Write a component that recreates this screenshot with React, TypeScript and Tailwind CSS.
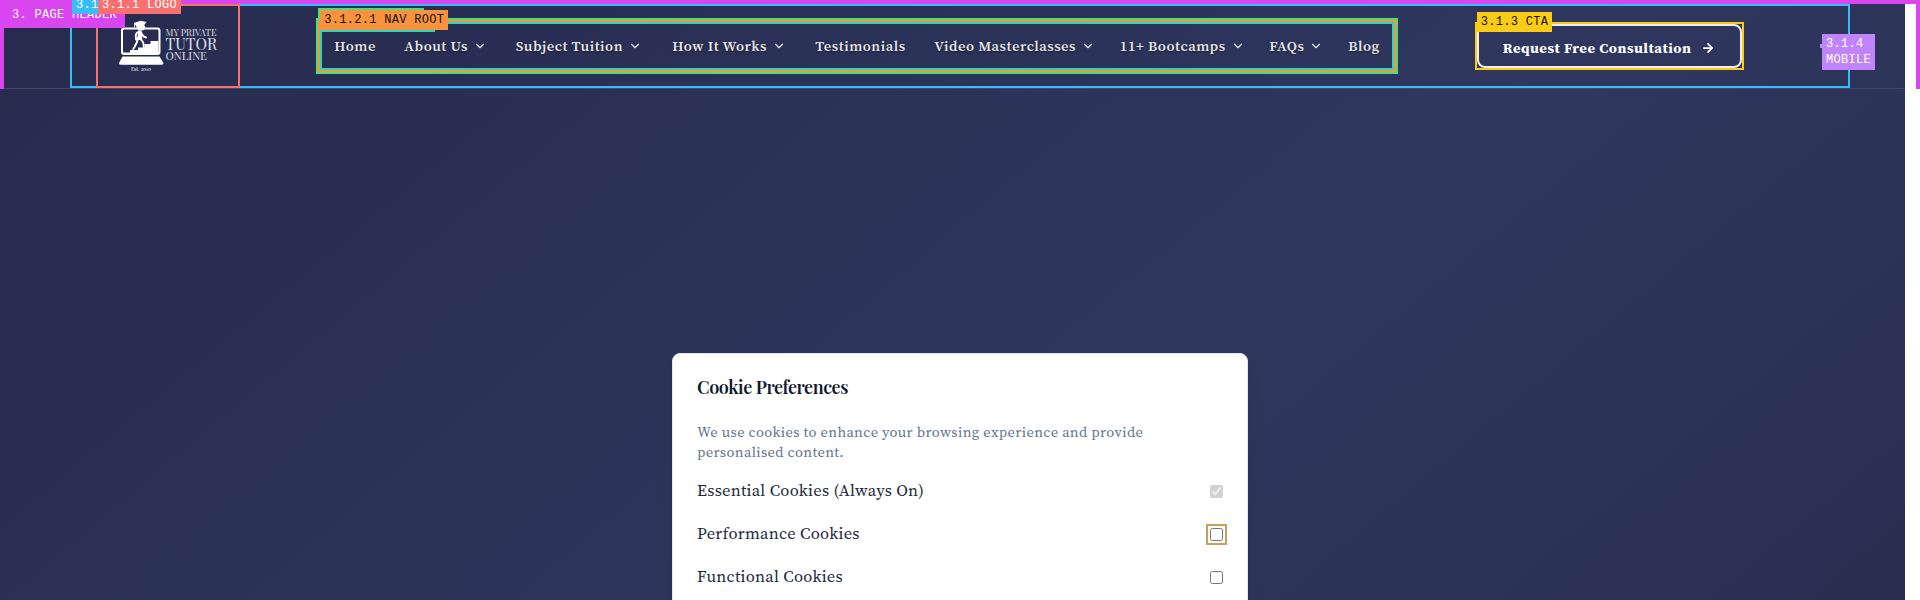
import React from "react";
import { ArrowRight, ChevronDown } from "lucide-react";

const serif = "font-['Source_Serif_4','Liberation_Serif',serif]";
const display = "font-['Playfair_Display','Liberation_Serif',serif]";
const mono = "font-['Liberation_Mono',monospace] text-[12px] leading-[16px] tracking-[0.3px] whitespace-nowrap";

const navItems: { label: string; width: string; menu?: boolean }[] = [
  { label: "Home", width: "w-[42px]" },
  { label: "About Us", width: "w-[83.5px]", menu: true },
  { label: "Subject Tuition", width: "w-[128.5px]", menu: true },
  { label: "How It Works", width: "w-[115px]", menu: true },
  { label: "Testimonials", width: "w-[91px]" },
  { label: "Video Masterclasses", width: "w-[157.5px]", menu: true },
  { label: "11+ Bootcamps", width: "w-[121.5px]", menu: true },
  { label: "FAQs", width: "w-[51px]", menu: true },
  { label: "Blog", width: "w-[32px]" },
];

function Logo() {
  return (
    <svg width="100" height="52" viewBox="118 20 100 52" fill="#fff" className={display}>
      <path d="M124 27.5h33.5a3 3 0 0 1 3 3V52a3 3 0 0 1-3 3H124a3 3 0 0 1-3-3V30.500a3 3 0 0 1 3-3Zm.2 2a1.200 1.200 0 0 0-1.200 1.200v20.600a1.200 1.200 0 0 0 1.200 1.200h33.100a1.200 1.200 0 0 0 1.200-1.200V30.700a1.200 1.200 0 0 0-1.200-1.200Z" fillRule="evenodd" />
      <path d="M130 53v-3h8v-2.500h6.500V44h6V41h8v12Z" />
      <path d="M122.500 56.500h37l4 6.500q.2 1.800-1.800 1.800h-41q-2 0-1.700-1.800Z" />
      <path d="m134 23 6.500-2.200 6 1.300-2.200 2.600 1 2.500a4 4 0 0 1-4.300 3.300q-3.400 0-4.300-3.300l-1.200-2Z" />
      <path d="m135 22.800-.6 4.300" stroke="#fff" strokeWidth="1" fill="none" />
      <path d="M139 31.500q-3.500 1.500-3.200 4.500l.2 3.500M141 32.500l2.500 4 2.500 1M138 38l-1 4-2.500 5-1.300 2M140.500 39l2.800 3.500.5 5" stroke="#fff" strokeWidth="1.900" fill="none" strokeLinecap="round" strokeLinejoin="round" />
      <path d="M138 30.500h3.500L142.300 40h-5Z" />
      <text x="165.500" y="36" fontSize="9.500" fill="#e2e2ea" textLength="51" lengthAdjust="spacingAndGlyphs">MY PRIVATE</text>
      <text x="165.500" y="49.500" fontSize="16" fill="#e2e2ea" textLength="51.500" lengthAdjust="spacingAndGlyphs">TUTOR</text>
      <text x="165.500" y="59.800" fontSize="12" fill="#e2e2ea" textLength="41.500" lengthAdjust="spacingAndGlyphs">ONLINE</text>
      <text x="131" y="71" fontSize="5.500" fill="#fff" textLength="20" lengthAdjust="spacingAndGlyphs">Est. 2010</text>
    </svg>
  );
}

function Header() {
  return (
    <header className="relative h-[89px] w-[1920px]">
      <div className="absolute inset-0 z-10 border-x-4 border-t-4 border-[#d946ef]" />
      <div className={`absolute left-0 top-0 z-10 h-7 w-[125px] bg-[#d946ef] pl-3 pt-[7px] text-white ${mono}`}>3. PAGE HEADER</div>
      <div className="h-[89px] w-[1905px] border-b border-[#434869] pl-[70px] pt-1">
        <div className="relative flex h-[84px] w-[1780px] items-center justify-between px-[26px] outline-2 -outline-offset-2 outline-[#38bdf8]">
          <div className={`absolute left-0.5 -top-1 z-20 h-[14px] w-10 bg-[#38bdf8] pl-1 text-white ${mono}`}><div className="-mt-[3px]">3.1</div></div>

          <div className="relative flex h-[84px] w-36 items-center justify-center outline-2 -outline-offset-2 outline-[#f87171]">
            <Logo />
            <div className={`absolute left-0.5 -top-1 z-20 h-[14px] w-[83px] bg-[#f87171] pl-1 text-white ${mono}`}><div className="-mt-[3px]">3.1.1 LOGO</div></div>
          </div>

          <nav className="relative flex h-14 items-center border-2 border-[#4ade80]">
            <div className="absolute -top-3 left-0 h-4 w-[106px] bg-[#4ade80]" />
            <div className="relative flex h-[52px] items-center border-2 border-[#fb923c]">
              <ul className={`relative flex h-12 items-center gap-7 border-2 border-[#2dd4bf] px-3 text-[14.5px] font-semibold leading-none tracking-[0.52px] text-[#e5e5e7] ${serif}`}>
                {navItems.map((item) => (
                  <li key={item.label} className={`flex shrink-0 items-center gap-[5px] whitespace-nowrap ${item.width}`}>
                    <span className="[text-shadow:0_1px_2px_rgba(0,0,0,0.5)]">{item.label}</span>
                    {item.menu && <ChevronDown size={14} strokeWidth={2} className="shrink-0" />}
                  </li>
                ))}
              </ul>
              <div className="absolute left-0.5 top-0 h-2.5 w-[113px] bg-[#2dd4bf]" />
              <div className={`absolute -top-3 left-0 h-5 w-32 bg-[#fb923c] pl-1 pt-0.5 text-[#111] ${mono}`}>3.1.2.1 NAV ROOT</div>
            </div>
          </nav>

          <div className="relative p-0.5 outline-2 -outline-offset-2 outline-[#facc15]">
            <button className={`flex h-11 w-[265px] items-center justify-center gap-2.5 rounded-lg border-2 border-[#f3f0f4] pt-[3px] text-[14.5px] font-bold leading-none tracking-[0.53px] text-white ${serif}`}>
              <span className="pt-0.5">Request Free Consultation</span>
              <ArrowRight size={14} strokeWidth={3} />
            </button>
            <div className={`absolute left-0.5 -top-2.5 h-5 w-[75px] bg-[#facc15] pl-1 pt-0.5 text-[#111] ${mono}`}>3.1.3 CTA</div>
          </div>

          <div className="relative h-1 w-1 bg-[#c084fc]">
            <div className={`absolute left-0.5 -top-2.5 h-9 w-[53px] bg-[#c084fc] pl-1 pt-0.5 text-white ${mono}`}>3.1.4<br />MOBILE</div>
          </div>
        </div>
      </div>
    </header>
  );
}

function CookieCard() {
  const options = [
    { label: "Essential Cookies (Always On)", on: true },
    { label: "Performance Cookies", focus: true },
    { label: "Functional Cookies" },
  ];
  return (
    <section className={`mx-auto mt-[263.500px] h-[400px] w-[576px] rounded-lg border border-[#e2e8f0] bg-white px-6 pt-[23px] shadow-lg ${serif}`}>
      <h2 className={`text-[18px] font-semibold leading-5 tracking-[-0.45px] text-[#0f172a] ${display}`}>Cookie Preferences</h2>
      <p className="mt-[25px] text-[14.5px] leading-5 tracking-[0.34px] text-[#64748b]">
        We use cookies to enhance your browsing experience and provide
        <br />
        personalised content.
      </p>
      <div className="mt-[8.500px] flex flex-col">
        {options.map((o) => (
          <label key={o.label} className="flex h-[43px] items-center justify-between text-[16.5px] tracking-[0.26px] text-[#1e293b]">
            <span>{o.label}</span>
            <input
              type="checkbox"
              defaultChecked={o.on}
              disabled={o.on}
              className={o.focus ? "size-[13px] outline-2 outline-offset-2 outline-[#ca9e5b]" : "size-[13px]"}
            />
          </label>
        ))}
      </div>
    </section>
  );
}

export default function App() {
  return (
    <div className="flex h-[600px] w-[1920px] overflow-hidden bg-white">
      <div className="h-[600px] w-[1905px] shrink-0 bg-[linear-gradient(140deg,#262b4e_0%,#2f375f_62%,#282f51_100%)]">
        <Header />
        <div className="w-[1920px]">
          <CookieCard />
        </div>
      </div>
    </div>
  );
}
